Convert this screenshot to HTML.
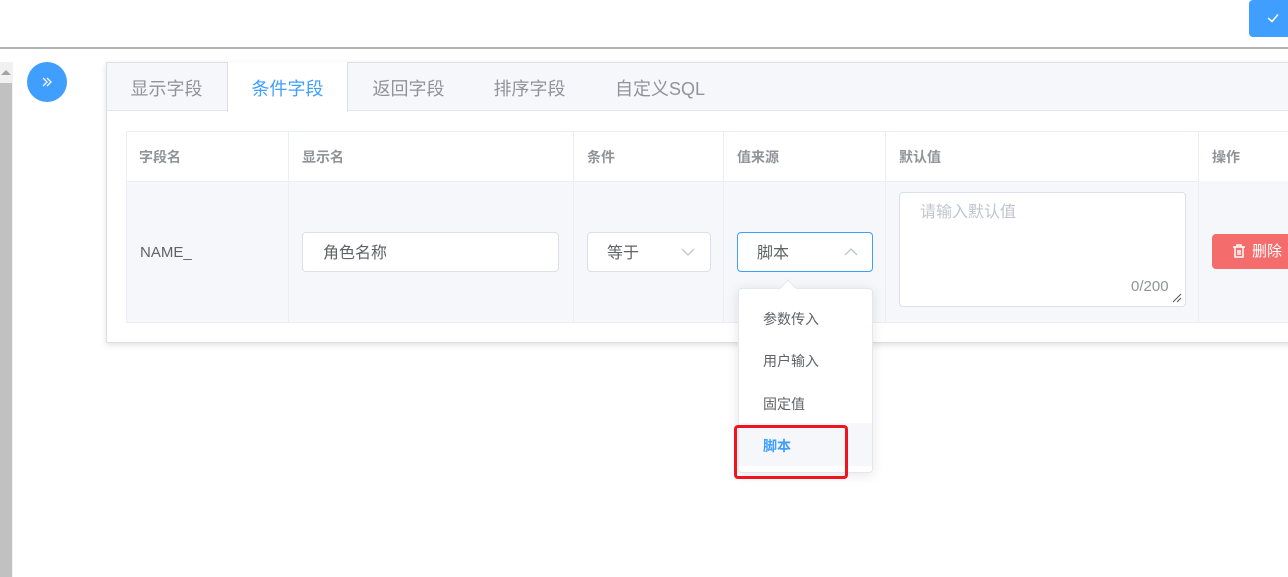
<!DOCTYPE html>
<html><head><meta charset="utf-8"><style>
*{box-sizing:border-box;margin:0;padding:0}
body{width:1288px;height:577px;overflow:hidden;background:#fff;font-family:"Liberation Sans","Noto Sans CJK SC",sans-serif;position:relative;color:#606266}
.a{position:absolute}
.th{position:absolute;top:131px;height:50px;line-height:52px;font-size:14px;font-weight:bold;color:#909399;border-right:1px solid #ebeef5;padding-left:13px}
.td{position:absolute;top:181px;height:141px;border-right:1px solid #ebeef5;border-top:1px solid #ebeef5}
.inp{position:absolute;background:#fff;border:1px solid #dcdfe6;border-radius:4px;font-size:16px;color:#606266;line-height:41px}
.tab{position:absolute;top:62px;height:50px;line-height:54px;font-size:18px;color:#909399;text-align:center;width:121px}
.it{position:absolute;left:738px;width:134px;padding-left:25px;font-size:14px;color:#606266;height:42px;line-height:44px}
</style></head><body>
<div class="a" style="left:0;top:47px;width:1288px;height:2px;background:#b4b4b4"></div>
<div class="a" style="left:1249px;top:0;width:50px;height:37px;background:#409eff;border-radius:4px"></div>
<svg class="a" style="left:1266px;top:11px" width="14" height="14" viewBox="0 0 14 14"><path d="M2 7 L6 10.5 L12 3.5" stroke="#fff" stroke-width="1.5" fill="none"/></svg>
<div class="a" style="left:0;top:62px;width:13px;height:515px;background:#f1f1f1"></div>
<div class="a" style="left:0;top:83px;width:12px;height:494px;background:#c1c1c1"></div>
<div class="a" style="left:1px;top:70px;width:0;height:0;border-left:5px solid transparent;border-right:5px solid transparent;border-bottom:5px solid #a3a3a3"></div>
<div class="a" style="left:27px;top:62px;width:40px;height:40px;border-radius:50%;background:#409eff"></div>
<svg class="a" style="left:41px;top:76px" width="12" height="12" viewBox="0 0 12 12"><path d="M2 2 L6 6 L2 10 M6 2 L10 6 L6 10" stroke="#fff" stroke-width="1.3" fill="none"/></svg>
<div class="a" style="left:106px;top:62px;width:1190px;height:281px;border:1px solid #dcdfe6;background:#fff;box-shadow:0 2px 6px rgba(0,0,0,.12)"></div>
<div class="a" style="left:107px;top:63px;width:1181px;height:48px;background:#f5f7fa;border-bottom:1px solid #e4e7ed"></div>
<div class="tab" style="left:106px">显示字段</div>
<div class="tab" style="left:227px;background:#fff;color:#409eff;border-left:1px solid #dcdfe6;border-right:1px solid #dcdfe6;height:50px">条件字段</div>
<div class="tab" style="left:348px">返回字段</div>
<div class="tab" style="left:469px">排序字段</div>
<div class="tab" style="left:596px;width:128px">自定义SQL</div>
<div class="a" style="left:126px;top:131px;width:1170px;height:192px;border:1px solid #ebeef5"></div>
<div class="a" style="left:127px;top:181px;width:1161px;height:141px;background:#f5f7fa"></div>
<div class="th" style="left:126px;width:163px">字段名</div>
<div class="th" style="left:289px;width:285px">显示名</div>
<div class="th" style="left:574px;width:150px">条件</div>
<div class="th" style="left:724px;width:162px">值来源</div>
<div class="th" style="left:886px;width:313px">默认值</div>
<div class="th" style="left:1199px;width:100px;border:none">操作</div>
<div class="td" style="left:126px;width:163px"></div>
<div class="td" style="left:289px;width:285px"></div>
<div class="td" style="left:574px;width:150px"></div>
<div class="td" style="left:724px;width:162px"></div>
<div class="td" style="left:886px;width:313px"></div>
<div class="a" style="left:140px;top:244px;font-size:15px;color:#606266">NAME_</div>
<div class="inp" style="left:302px;top:232px;width:257px;height:40px;padding-left:20px">角色名称</div>
<div class="inp" style="left:587px;top:232px;width:124px;height:40px;padding-left:19px">等于</div>
<svg class="a" style="left:681px;top:247px" width="14" height="10"><path d="M1 2 L7 8 L13 2" stroke="#c0c4cc" stroke-width="1.3" fill="none"/></svg>
<div class="inp" style="left:737px;top:232px;width:136px;height:40px;padding-left:19px;border-color:#409eff">脚本</div>
<svg class="a" style="left:844px;top:247px" width="14" height="10"><path d="M1 8 L7 2 L13 8" stroke="#c0c4cc" stroke-width="1.3" fill="none"/></svg>
<div class="inp" style="left:899px;top:192px;width:287px;height:115px;padding:0 0 0 20px;line-height:39px;color:#c0c4cc">请输入默认值</div>
<div class="a" style="left:1131px;top:278px;font-size:15px;color:#909399">0/200</div>
<svg class="a" style="left:1172px;top:293px" width="10" height="10"><path d="M1 9 L9 1 M5 9 L9 5" stroke="#555" stroke-width="1"/></svg>
<div class="a" style="left:1212px;top:234px;width:90px;height:35px;background:#f56c6c;border-radius:4px;color:#fff;font-size:15px;line-height:36px;padding-left:40px">删除</div>
<svg class="a" style="left:1232px;top:244px" width="14" height="14" viewBox="0 0 14 14"><path d="M1 3 H13 M5 3 V1 H9 V3 M3 3 V13 H11 V3 M6 6 V11 M8 6 V11" stroke="#fff" stroke-width="1.5" fill="none"/></svg>
<div class="a" style="left:738px;top:288px;width:135px;height:185px;background:#fff;border:1px solid #e4e7ed;border-radius:4px;box-shadow:0 2px 12px rgba(0,0,0,.1)"></div>
<div class="a" style="left:782px;top:282px;width:12px;height:12px;background:#fff;border-left:1px solid #e4e7ed;border-top:1px solid #e4e7ed;transform:rotate(45deg)"></div>
<div class="a" style="left:739px;top:423px;width:133px;height:43px;background:#f5f7fa"></div>
<div class="it" style="top:297px">参数传入</div>
<div class="it" style="top:339px">用户输入</div>
<div class="it" style="top:382px">固定值</div>
<div class="it" style="top:424px;color:#409eff;font-weight:bold">脚本</div>
<div class="a" style="left:734px;top:425px;width:114px;height:54px;border:3px solid #f0141e;border-radius:4px"></div>
</body></html>
